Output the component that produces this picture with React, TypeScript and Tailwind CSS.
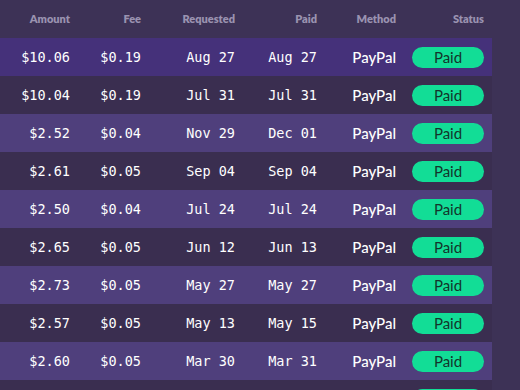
const payouts = [
  { amount: "$10.06", fee: "$0.19", requested: "Aug 27", paid: "Aug 27" },
  { amount: "$10.04", fee: "$0.19", requested: "Jul 31", paid: "Jul 31" },
  { amount: "$2.52", fee: "$0.04", requested: "Nov 29", paid: "Dec 01" },
  { amount: "$2.61", fee: "$0.05", requested: "Sep 04", paid: "Sep 04" },
  { amount: "$2.50", fee: "$0.04", requested: "Jul 24", paid: "Jul 24" },
  { amount: "$2.65", fee: "$0.05", requested: "Jun 12", paid: "Jun 13" },
  { amount: "$2.73", fee: "$0.05", requested: "May 27", paid: "May 27" },
  { amount: "$2.57", fee: "$0.05", requested: "May 13", paid: "May 15" },
  { amount: "$2.60", fee: "$0.05", requested: "Mar 30", paid: "Mar 31" },
  { amount: "$2.48", fee: "$0.04", requested: "Mar 02", paid: "Mar 03" },
]

const cols = "grid grid-cols-[78px_71px_94px_82px_79px_88px] items-center"
const mono = "font-['DejaVu_Sans_Mono',monospace] text-[13.5px] text-white text-right pr-2"

function rowBg(i: number) {
  if (i === 0) return "bg-[#45317a]"
  return i % 2 === 0 ? "bg-[#4f3f7c]" : "bg-[#3a2e50]"
}

export default function App() {
  return (
    <div className="w-[520px] h-[390px] overflow-hidden bg-[#3d3256]">
      <div className="w-[492px]">
        <div className={`${cols} h-[38px] font-['Lato',sans-serif] text-[11px] font-extrabold text-[#9a92b0]`}>
          <div className="text-right pr-2">Amount</div>
          <div className="text-right pr-2">Fee</div>
          <div className="text-right pr-2">Requested</div>
          <div className="text-right pr-2">Paid</div>
          <div className="text-right pr-2">Method</div>
          <div className="text-right pr-2">Status</div>
        </div>
        {payouts.map((p, i) => (
          <div key={i} className={`${cols} h-[38px] ${rowBg(i)}`}>
            <div className={mono}>{p.amount}</div>
            <div className={mono}>{p.fee}</div>
            <div className={mono}>{p.requested}</div>
            <div className={mono}>{p.paid}</div>
            <div className="text-right pr-2 font-['Lato',sans-serif] text-[15px] font-medium text-white">PayPal</div>
            <div className="flex justify-end pr-2">
              <span className="w-[72px] h-[21px] rounded-full bg-[#12dd96] text-[#12352b] font-['Lato',sans-serif] text-[15px] leading-[21px] text-center">
                Paid
              </span>
            </div>
          </div>
        ))}
      </div>
    </div>
  )
}
